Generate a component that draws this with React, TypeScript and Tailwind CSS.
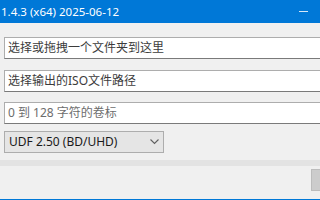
import React from 'react';

const fieldFont = { fontFamily: '"Noto Sans", "Noto Sans CJK SC", sans-serif' };

const TextField: React.FC<{ text: string; muted?: boolean; className?: string }> = ({ text, muted, className = '' }) => (
  <div
    className={`h-[22px] w-[330px] bg-white border border-[#adadad] border-b-[#7a7a7a] flex items-center pl-[3px] text-[12px] ${muted ? 'text-[#6d6d6d]' : 'text-[#3c3c3c]'} ${className}`}
  >
    <span className="leading-none">{text}</span>
  </div>
);

const App: React.FC = () => {
  return (
    <div className="w-[320px] h-[200px] overflow-hidden bg-[#f0f0f0] flex flex-col" style={fieldFont}>
      <div className="h-[23px] shrink-0 bg-[#0078d7] flex items-center justify-between">
        <span className="text-white text-[11.5px] leading-none pl-px">1.4.3 (x64) 2025-06-12</span>
        <div className="w-[9px] h-px bg-[#d6e8f8] mr-[12px]" />
      </div>

      <div className="pl-[4px] flex flex-col">
        <TextField text="选择或拖拽一个文件夹到这里" className="mt-[14px]" />
        <TextField text="选择输出的ISO文件路径" className="mt-[11px]" />
        <TextField text="0 到 128 字符的卷标" muted className="mt-[10px]" />

        <div className="mt-[7px] h-[22px] w-[160px] bg-[#e5e5e5] border border-[#adadad] flex items-center justify-between pl-[4px] pr-[4px] text-[12px] text-[#1a1a1a]">
          <span className="leading-none">UDF 2.50 (BD/UHD)</span>
          <svg width="9" height="6" viewBox="0 0 9 6" fill="none">
            <path d="M0.5 0.5 L4.5 4.5 L8.5 0.5" stroke="#606060" strokeWidth="1.1" />
          </svg>
        </div>
      </div>

      <div className="mt-[7px] h-[6px] shrink-0 bg-[#e3e3e3]" />

      <div className="flex justify-end mt-[3px]">
        <div className="w-[20px] h-[22px] -mr-[11px] bg-[#cccccc] border border-[#bcbcbc]" />
      </div>

      <div className="mt-auto h-px bg-[#0078d7]" />
    </div>
  );
};

export default App;
